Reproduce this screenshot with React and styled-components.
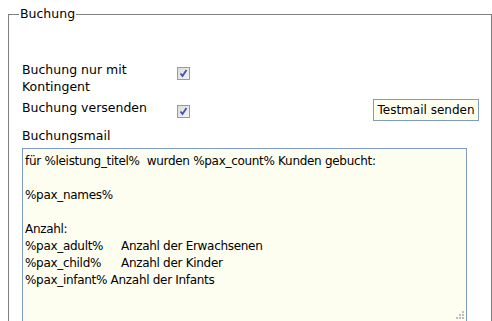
import React from "react";
import styled, { createGlobalStyle } from "styled-components";

const GlobalStyle = createGlobalStyle`
  html, body {
    margin: 0;
    padding: 0;
    background: #ffffff;
    overflow: hidden;
  }
  body {
    font-family: "DejaVu Sans", Verdana, sans-serif;
    font-size: 12.5px;
    color: #000;
  }
`;

const Fieldset = styled.fieldset`
  box-sizing: border-box;
  margin: 7px 0 0 8px;
  width: 484px;
  padding: 0 12px 10px 13px;
  border: 1px solid #808080;
  min-height: 340px;
`;

const Legend = styled.legend`
  padding: 0 1px;
  margin-left: -3px;
  font-size: 12.5px;
  line-height: 14px;
`;

const Form = styled.div`
  display: grid;
  grid-template-columns: 155px 1fr auto;
  align-items: start;
  row-gap: 4px;
  padding-top: 40px;
`;

const Label = styled.div`
  line-height: 17px;
`;

const CheckCell = styled.div`
  padding-top: 6px;
`;

const Check = styled.span`
  display: block;
  box-sizing: border-box;
  width: 13px;
  height: 13px;
  border: 1px solid #9a9a9a;
  background: linear-gradient(135deg, #dcdcdc 0%, #f4f4f4 100%);
  position: relative;

  svg {
    position: absolute;
    left: 1px;
    top: 1px;
  }
`;

const Button = styled.button`
  box-sizing: border-box;
  height: 22px;
  width: 106px;
  padding: 0;
  border: 1px solid #7f9db9;
  background: #fffff0;
  font-family: "DejaVu Sans", Verdana, sans-serif;
  font-size: 12px;
  color: #000;
`;

const MailLabel = styled.div`
  grid-column: 1 / -1;
  line-height: 17px;
  padding-top: 2px;
`;

const AreaWrap = styled.div`
  grid-column: 1 / -1;
  position: relative;
  width: 445px;
  height: 174px;
`;

const TextArea = styled.textarea`
  display: block;
  box-sizing: border-box;
  width: 100%;
  height: 100%;
  margin: 0;
  padding: 4px 2px 3px;
  border: 1px solid #7f9db9;
  background: #fefef0;
  font-family: "DejaVu Sans", Verdana, sans-serif;
  font-size: 12px;
  letter-spacing: -0.3px;
  line-height: 17px;
  color: #000;
  tab-size: 32px;
  resize: none;
  outline: none;
  overflow: hidden;
`;

const Grip = styled.svg`
  position: absolute;
  right: 2px;
  bottom: 2px;
`;

const CheckMark = () => (
  <Check>
    <svg width="9" height="9" viewBox="0 0 9 9">
      <path d="M1.5 4.5 L3.5 7 L7.5 1" fill="none" stroke="#3d56a6" strokeWidth="1.8" />
    </svg>
  </Check>
);

const mailText =
  "für %leistung_titel%  wurden %pax_count% Kunden gebucht:\n\n%pax_names%\n\nAnzahl:\n%pax_adult%\tAnzahl der Erwachsenen\n%pax_child%\tAnzahl der Kinder\n%pax_infant% Anzahl der Infants";

export default function App() {
  return (
    <>
      <GlobalStyle />
      <Fieldset>
        <Legend>Buchung</Legend>
        <Form>
          <Label>
            Buchung nur mit
            <br />
            Kontingent
          </Label>
          <CheckCell>
            <CheckMark />
          </CheckCell>
          <div />
          <Label>Buchung versenden</Label>
          <CheckCell>
            <CheckMark />
          </CheckCell>
          <div>
            <Button>Testmail senden</Button>
          </div>
          <MailLabel>Buchungsmail</MailLabel>
          <AreaWrap>
            <TextArea defaultValue={mailText} spellCheck={false} />
            <Grip width="10" height="10" viewBox="0 0 10 10">
              <g fill="#bdbdbd">
                <rect x="7" y="1" width="2" height="2" />
                <rect x="4" y="4" width="2" height="2" />
                <rect x="7" y="4" width="2" height="2" />
                <rect x="1" y="7" width="2" height="2" />
                <rect x="4" y="7" width="2" height="2" />
                <rect x="7" y="7" width="2" height="2" />
              </g>
            </Grip>
          </AreaWrap>
        </Form>
      </Fieldset>
    </>
  );
}
